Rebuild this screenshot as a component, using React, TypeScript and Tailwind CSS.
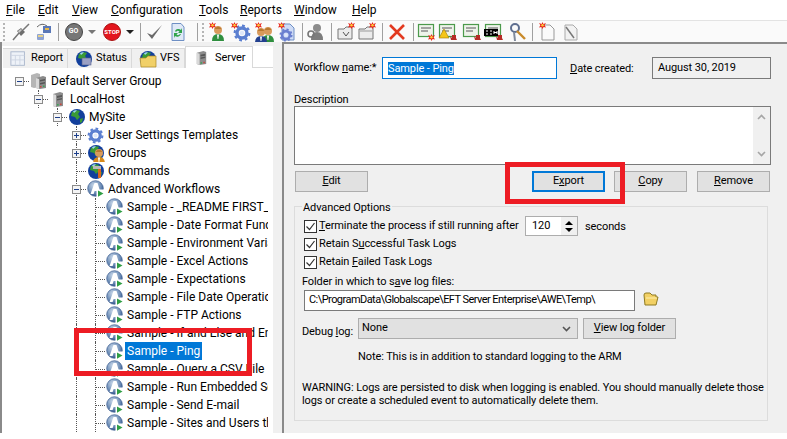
import React from "react";

const FONT = "font-['Roboto','Noto_Sans',sans-serif]";
const SMALL = "text-[11px] tracking-[-0.1px]";

function AIcon() {
  return (
    <svg width="18" height="18" viewBox="0 0 18 18">
      <defs>
        <radialGradient id="ag" cx="40%" cy="30%" r="75%">
          <stop offset="0" stopColor="#c8d8ea" />
          <stop offset="0.6" stopColor="#6f8fb8" />
          <stop offset="1" stopColor="#2c4f86" />
        </radialGradient>
      </defs>
      <circle cx="8.5" cy="8.5" r="7.8" fill="url(#ag)" stroke="#3d5f92" strokeWidth="0.7" />
      <path d="M7.5 3 L10.5 3 L14 14 L11 14 L10.4 11 L7.6 11 L6.6 14 L3.5 14 Z" fill="#fff" />
      <rect x="9.5" y="9.5" width="8" height="8" fill="#fff" />
      <path d="M11 10.5 L16.5 13.5 L11 16.8 Z" fill="#2f9e44" />
    </svg>
  );
}

function Globe({ extra }: { extra?: React.ReactNode }) {
  return (
    <svg width="18" height="18" viewBox="0 0 18 18">
      <circle cx="9" cy="9" r="8" fill="#123f9c" />
      <path d="M4 4 Q8 1 12 3 L10 6 L12 9 L9 12 L7 9 L3 8 Z" fill="#3a9a35" />
      <path d="M12 11 L15 10 L14 14 L12 15 Z" fill="#3a9a35" />
      <path d="M5 3 Q7 2 9 2.4 L6 5 Z" fill="#9fd3f5" />
      {extra}
    </svg>
  );
}

function Server({ s = 16 }: { s?: number }) {
  return (
    <svg width={s} height={s + 1} viewBox="0 0 16 17">
      <path d="M3 3 L10 1 L13 2 V15 L6 16 L3 15 Z" fill="#8d8d8d" />
      <path d="M3 3 L6 4 V16 L3 15 Z" fill="#d9d9d9" />
      <path d="M7 5 L12 4 V6 L7 7 Z M7 8 L12 7 V8.5 L7 9.5 Z" fill="#585858" />
      <rect x="7" y="13" width="1.6" height="1.6" fill="#3aa655" />
      <rect x="10" y="12.5" width="1.6" height="1.6" fill="#c9473c" />
    </svg>
  );
}

function Servers() {
  return (
    <svg width="18" height="18" viewBox="0 0 18 18">
      <path d="M1 3 L7 1 L10 2 V15 L4 16 L1 15 Z" fill="#b5b5b5" />
      <path d="M6 6 L13 4 L16 5 V16 L10 17 L6 16 Z" fill="#8a8a8a" />
      <path d="M6 6 L9 7 V17 L6 16 Z" fill="#d8d8d8" />
      <path d="M10 8 L15 7 V8.5 L10 9.5 Z M10 11 L15 10 V11.5 L10 12.5 Z" fill="#555" />
      <rect x="10" y="14" width="1.5" height="1.5" fill="#c9473c" />
      <rect x="13" y="13.5" width="1.5" height="1.5" fill="#3aa655" />
    </svg>
  );
}

function Gear({ c = "#5b7fd0", s = 18 }: { c?: string; s?: number }) {
  return (
    <svg width={s} height={s} viewBox="0 0 18 18">
      <circle cx="9" cy="9" r="5" fill="none" stroke={c} strokeWidth="3.4" />
      <circle cx="9" cy="9" r="7.3" fill="none" stroke={c} strokeWidth="2.2" strokeDasharray="2.8 2.9" />
      <circle cx="9" cy="9" r="2.2" fill="#dfe8fa" />
    </svg>
  );
}

function Burst({ x = 0, y = 0 }: { x?: number; y?: number }) {
  return (
    <g transform={`translate(${x} ${y})`}>
      <path d="M3.5 0 L4.4 2 L7 1 L5.6 3.3 L7 5.6 L4.6 5 L3.5 7 L2.5 5 L0 5.6 L1.4 3.3 L0 1 L2.6 2 Z" fill="#e8261b" />
      <circle cx="3.5" cy="3.3" r="1.2" fill="#ffd23c" />
    </g>
  );
}

function Person({ x = 0, y = 0, body = "#2f8f3f" }: { x?: number; y?: number; body?: string }) {
  return (
    <g transform={`translate(${x} ${y})`}>
      <circle cx="6" cy="5" r="4" fill="#d89a5b" />
      <path d="M2.5 4 Q6 -1 9.5 4 Z" fill="#b9782f" />
      <path d="M0 16 Q0 9 6 9 Q12 9 12 16 Z" fill={body} />
      <path d="M5 9.5 H7 L6.4 14 H5.6 Z" fill="#fff" />
    </g>
  );
}

const svg18 = (c: React.ReactNode, w = 20) => (
  <svg width={w} height="20" viewBox="0 0 20 20">
    {c}
  </svg>
);

const Cert = ({ children }: { children?: React.ReactNode }) => (
  <>
    <rect x="1.5" y="2.5" width="15" height="12" fill="#eef3ea" stroke="#4c9a4c" strokeWidth="1.2" />
    <path d="M4 6 H14 M4 9 H11" stroke="#8a8a8a" strokeWidth="1.4" />
    {children}
  </>
);

const Tip = () => <path d="M12 14 L14 16 L16 14 L18 16 L19 18 H13 Z M14 13 H18 V16 H14 Z" fill="#b52b25" />;

const TOOLS: Array<{ w: number; n?: React.ReactNode; sep?: boolean }> = [
  { w: 23, n: svg18(<g><path d="M2 18 L8 11 M12 8 L18 2" stroke="#777" strokeWidth="1.5" /><path d="M6 9 L10 6 L14 10 L10 14 Z" fill="#6e6e6e" /><path d="M7 9 L10 7 L11 8 L8 11 Z" fill="#c8c8c8" /></g>) },
  { w: 23, n: svg18(<g><path d="M3 5 Q8 0 13 4" fill="none" stroke="#666" /><rect x="9" y="4" width="8" height="7" fill="#5a78b8" /><rect x="11" y="6" width="4" height="2" fill="#e6b94a" /><rect x="3" y="12" width="7" height="6" rx="1" fill="#8ea3d2" /><rect x="4" y="13" width="5" height="2" fill="#e7d289" /></g>) },
  { w: 7, sep: true },
  { w: 23, n: <div className="flex h-[18px] w-[18px] items-center justify-center rounded-full border border-[#444] bg-[#777]"><span className="text-[7px] leading-none font-bold text-white">GO</span></div> },
  { w: 14, n: <div className="h-0 w-0 border-x-[4px] border-t-[4px] border-x-transparent border-t-[#777]" /> },
  { w: 26, n: <div className="flex h-[18px] w-[18px] items-center justify-center rounded-full border border-[#a11] bg-[#e3161e]"><span className="text-[6px] leading-none font-bold text-white">STOP</span></div> },
  { w: 10, n: <div className="h-0 w-0 border-x-[4px] border-t-[4px] border-x-transparent border-t-[#222]" /> },
  { w: 10, sep: true },
  { w: 18, n: svg18(<path d="M3 11 L8 17 L18 3 L8 13 Z" fill="#6a6a6a" />) },
  { w: 30, n: svg18(<g><path d="M4 1.5 H13 L16 5 V18.5 H4 Z" fill="#dfe9f7" stroke="#6e8fc4" /><path d="M7 9 A4 4 0 0 1 13 8 L14 6 V11 H10 L11.5 9.5 A2.5 2.5 0 0 0 8 10 Z M13 12 A4 4 0 0 1 7 14 L6 16 V11 H10 L8.5 12.5 A2.5 2.5 0 0 0 12 12 Z" fill="#2fa34a" /></g>) },
  { w: 8, sep: true },
  { w: 23, n: svg18(<g><Person x={4} y={3} /><Burst x={1} y={0} /></g>) },
  { w: 24, n: svg18(<g><g transform="translate(2 2)"><Gear s={18} /></g><Burst x={0} y={0} /></g>) },
  { w: 22, n: svg18(<g><Person x={8} y={4} /><Person x={1} y={5} body="#23408f" /><Burst x={1} y={0} /></g>) },
  { w: 24, n: svg18(<g><path d="M5 2 H13 L17 6 V18 H5 Z" fill="#cfdcf6" stroke="#6e8fc4" /><g transform="translate(2 6)"><Gear s={14} c="#6a7fd0" /></g><Burst x={1} y={0} /></g>) },
  { w: 6, sep: true },
  { w: 21, n: svg18(<g><circle cx="11" cy="6" r="4" fill="#8c8c8c" /><path d="M5 18 Q5 10 11 10 Q17 10 17 18 Z" fill="#7d7d7d" /><circle cx="5" cy="12" r="3" fill="none" stroke="#777" strokeWidth="1.6" /></g>) },
  { w: 10, sep: true },
  { w: 20, n: svg18(<g><path d="M2 7 H8 L10 5 H16 V17 H2 Z" fill="#ececec" stroke="#777" /><path d="M7 10 L10 14 L13 10" fill="none" stroke="#555" /><Burst x={12} y={0} /></g>) },
  { w: 22, n: svg18(<g><path d="M2 7 H8 L10 5 H16 V17 H2 Z" fill="#ececec" stroke="#777" /><path d="M3 9 H15" stroke="#999" /><Burst x={12} y={0} /></g>) },
  { w: 8, sep: true },
  { w: 22, n: svg18(<path d="M3 3 L17 17 M17 3 L3 17" stroke="#e2391f" strokeWidth="2.6" />) },
  { w: 11, sep: true },
  { w: 16, n: svg18(<Cert><Burst x={11} y={12} /></Cert>) },
  { w: 26, n: svg18(<Cert><path d="M6 7 L11 16 H1 Z" fill="#f5c518" stroke="#a07a00" strokeWidth="0.6" /><Tip /></Cert>) },
  { w: 22, n: svg18(<Cert><Tip /></Cert>) },
  { w: 22, n: svg18(<g><Cert /><rect x="0" y="7" width="14" height="7" fill="#000" /><path d="M2 9 H4 M6 9 H8 M10 9 V12 M13 9 V12 M2 12 H4 M6 12 H8 M10 10.5 H13" stroke="#fff" strokeWidth="1" /><Tip /></g>) },
  { w: 26, n: svg18(<g><circle cx="7" cy="6" r="4" fill="none" stroke="#5f6f90" strokeWidth="2" /><path d="M9 9 L17 17" stroke="#c98a2b" strokeWidth="2.4" /><path d="M6 10 L7 19" stroke="#808a9c" strokeWidth="2" /></g>) },
  { w: 2, sep: true },
  { w: 28, n: svg18(<g><path d="M5 3 H13 L17 7 V18 H5 Z" fill="#fafafa" stroke="#999" /><Burst x={2} y={0} /></g>) },
  { w: 18, n: svg18(<g><path d="M5 3 H13 L17 7 V18 H5 Z" fill="#f2f2f2" stroke="#aaa" /><path d="M6 5 L14 16" stroke="#777" strokeWidth="1.5" /></g>) },
];

function Grip() {
  return <div className="mx-[1px] h-[18px] w-[3px] border-l-2 border-dotted border-[#b5b5b5]" />;
}

function Toolbar() {
  const left = TOOLS.slice(0, 11);
  const right = TOOLS.slice(11);
  const render = (t: (typeof TOOLS)[number], i: number) => (
    <div key={i} style={{ width: t.w }} className="flex h-[22px] shrink-0 items-center justify-center [&>*]:shrink-0">
      {t.sep ? <div className="h-[18px] w-px bg-[#a0a0a0]" /> : t.n}
    </div>
  );
  return (
    <div className="flex h-[22px] items-center border-t border-[#e3e3e3] bg-[#fafafa] pl-[2px]">
      <Grip />
      <div className="w-[2px]" />
      {left.map(render)}
      <Grip />
      {right.map(render)}
    </div>
  );
}

function Menu() {
  const items: Array<[string, string, number]> = [
    ["F", "ile", 32],
    ["E", "dit", 34],
    ["V", "iew", 39],
    ["C", "onfiguration", 88],
    ["T", "ools", 41],
    ["R", "eports", 54],
    ["W", "indow", 58],
    ["H", "elp", 40],
  ];
  return (
    <div className="flex h-[20px] items-center bg-white pl-[6px] text-[12px] text-black">
      {items.map(([u, r, w]) => (
        <span key={u} style={{ width: w }} className="shrink-0">
          <u>{u}</u>
          {r}
        </span>
      ))}
    </div>
  );
}

function Tab({ label, icon, w, active }: { label: string; icon: React.ReactNode; w: number; active?: boolean }) {
  return (
    <div
      style={{ width: w }}
      className={
        active
          ? `flex h-[23px] shrink-0 items-center gap-[6px] border-x border-t border-[#d9d9d9] bg-white pl-[8px] text-black ${SMALL}`
          : `mt-[2px] flex h-[21px] shrink-0 items-center gap-[3px] border-y border-r border-[#d9d9d9] bg-[#f0f0f0] pl-[7px] text-black ${SMALL}`
      }
    >
      {icon}
      <span>{label}</span>
    </div>
  );
}

function Expander({ kind }: { kind: "minus" | "plus" }) {
  return (
    <div className="relative flex h-[9px] w-[9px] items-center justify-center border border-[#8a8a8a] bg-[#f4f4f4]">
      <div className="h-px w-[5px] bg-[#1d3f8b]" />
      {kind === "plus" && <div className="absolute h-[5px] w-px bg-[#1d3f8b]" />}
    </div>
  );
}

type Row = {
  d: number;
  label: string;
  icon: React.ReactNode;
  exp?: "minus" | "plus";
  up?: boolean;
  guide?: boolean;
  sel?: boolean;
};

function TreeRow({ d, label, icon, exp, up, guide, sel }: Row) {
  return (
    <div className="flex h-[18px] w-[266px] shrink-0 items-center overflow-hidden whitespace-nowrap text-[12px] text-black">
      <div style={{ width: 8 + 19 * Math.max(d - 1, 0) }} className="shrink-0" />
      {d > 0 && (
        <div className="relative flex h-full w-[19px] shrink-0 justify-center">
          {guide && <div className="h-full w-0 border-l border-dotted border-[#555]" />}
        </div>
      )}
      <div className="relative flex h-full w-[19px] shrink-0 items-center justify-center">
        {up && <div className="absolute top-0 bottom-0 left-[9px] w-0 border-l border-dotted border-[#555]" />}
        <div className="absolute top-1/2 right-0 left-[10px] h-0 border-t border-dotted border-[#555]" />
        {exp && <Expander kind={exp} />}
      </div>
      <div className="flex w-[19px] shrink-0 items-center justify-center">{icon}</div>
      <span className={sel ? "ml-[1px] bg-[#0078d7] px-[2px] leading-[18px] text-white" : "ml-[3px] leading-[18px]"}>{label}</span>
    </div>
  );
}

const SAMPLES = [
  "Sample - _README FIRST_",
  "Sample - Date Format Functions",
  "Sample - Environment Variables",
  "Sample - Excel Actions",
  "Sample - Expectations",
  "Sample - File Date Operations",
  "Sample - FTP Actions",
  "Sample - If and Else and End",
  "Sample - Ping",
  "Sample - Query a CSV File",
  "Sample - Run Embedded Script",
  "Sample - Send E-mail",
  "Sample - Sites and Users that",
];

const ROWS: Row[] = [
  { d: 0, label: "Default Server Group", icon: <Servers />, exp: "minus" },
  { d: 1, label: "LocalHost", icon: <Server />, exp: "minus", up: true },
  { d: 2, label: "MySite", icon: <Globe />, exp: "minus", up: true },
  { d: 3, label: "User Settings Templates", icon: <Gear s={17} />, exp: "plus", up: true },
  { d: 3, label: "Groups", icon: <Globe extra={<Person x={6} y={4} body="#d88a1c" />} />, exp: "plus", up: true },
  { d: 3, label: "Commands", icon: <Globe extra={<g><rect x="6" y="4" width="8" height="3" fill="#b9b9b9" /><rect x="11" y="7" width="3" height="9" fill="#d8661c" /></g>} />, up: true },
  { d: 3, label: "Advanced Workflows", icon: <AIcon />, exp: "minus", up: true },
  ...SAMPLES.map((s) => ({ d: 4, label: s, icon: <AIcon />, up: true, guide: true, sel: s === "Sample - Ping" })),
];

function Tree() {
  return (
    <div className="flex flex-1 flex-col overflow-hidden bg-white pt-[4px]">
      {ROWS.map((r) => (
        <TreeRow key={r.label} {...r} />
      ))}
    </div>
  );
}

function Left() {
  return (
    <div className="flex w-[273px] shrink-0 flex-col border-l-2 border-[#8a8a8a] pt-[4px]">
      <div className="flex h-[22px] shrink-0 items-start bg-white pl-[1px]">
        <Tab
          label="Report"
          w={65}
          icon={svg18(<g><rect x="1" y="2" width="15" height="15" fill="#eef2f8" stroke="#a9b6cb" /><path d="M1 6 H16 M6 6 V17 M11 6 V17 M1 11 H16" stroke="#cdd5e2" /></g>, 18)}
        />
        <Tab
          label="Status"
          w={64}
          icon={<Globe extra={<rect x="7" y="8" width="9" height="7" fill="#9aa0c4" stroke="#565f8c" strokeWidth="0.6" />} />}
        />
        <Tab
          label="VFS"
          w={53}
          icon={<Globe extra={<path d="M1 8 H7 L9 6 H17 V17 H2 Z" fill="#f1d067" stroke="#a98824" strokeWidth="0.7" />} />}
        />
        <Tab label="Server" w={68} active icon={<Server s={15} />} />
        <div className="h-full flex-1 border-b border-[#d9d9d9]" />
      </div>
      <Tree />
    </div>
  );
}

function Btn({ children, w, focus, cls = "" }: { children: React.ReactNode; w: number; focus?: boolean; cls?: string }) {
  return (
    <div
      style={{ width: w }}
      className={`flex h-[21px] shrink-0 items-center justify-center bg-[#e1e1e1] text-black ${
        focus ? "border-2 border-[#0078d7]" : "border border-[#adadad]"
      } ${cls}`}
    >
      {children}
    </div>
  );
}

function Check({ children }: { children: React.ReactNode }) {
  return (
    <div className="flex h-[18px] items-center pl-[2px] whitespace-nowrap text-black">
      <div className="flex h-[13px] w-[13px] shrink-0 items-center justify-center border border-[#333] bg-white">
        <svg width="11" height="11" viewBox="0 0 11 11">
          <path d="M1.5 5.5 L4.5 8.5 L9.5 2" fill="none" stroke="#333" strokeWidth="1.2" />
        </svg>
      </div>
      <span className="ml-[2px]">{children}</span>
    </div>
  );
}

const Chevron = ({ up, c = "#a6a6a6" }: { up?: boolean; c?: string }) => (
  <svg width="9" height="6" viewBox="0 0 9 6">
    <path d={up ? "M1 5 L4.5 1.5 L8 5" : "M1 1 L4.5 4.5 L8 1"} fill="none" stroke={c} strokeWidth="1.6" />
  </svg>
);

function Right() {
  return (
    <div className={`flex-1 border-t-2 border-l-2 border-[#8a8a8a] bg-[#f0f0f0] pt-[13px] pl-[10px] whitespace-nowrap text-black ${SMALL}`}>
      <div className="flex h-[22px] items-center">
        <span className="mt-[1px] w-[88px] shrink-0">
          Workflow <u>n</u>ame:*
        </span>
        <div className="flex h-[22px] w-[175px] shrink-0 items-center border border-[#0078d7] bg-white pl-[5px]">
          <span className="bg-[#0078d7] leading-[13px] text-white">Sample - Ping</span>
        </div>
        <span className="mt-[2px] ml-[13px] w-[82px] shrink-0">
          <u>D</u>ate created:
        </span>
        <div className="flex h-[22px] w-[119px] shrink-0 items-start border border-[#7a7a7a] bg-[#f0f0f0] pt-[2px] pl-[5px]">
          August 30, 2019
        </div>
      </div>
      <div className="mt-[14px] h-[13px] leading-[14px]">Description</div>
      <div className="flex h-[59px] w-[477px] justify-end border border-[#7a7a7a] bg-white">
        <div className="flex h-full w-[17px] flex-col items-center justify-between bg-[#f0f0f0] py-[7px]">
          <Chevron up />
          <Chevron />
        </div>
      </div>
      <div className="mt-[6px] flex pl-[1px]">
        <Btn w={73}>
          <span>
            <u>E</u>dit
          </span>
        </Btn>
        <Btn w={73} focus cls="ml-[164px]">
          <span>
            E<u>x</u>port
          </span>
        </Btn>
        <Btn w={73} cls="ml-[9px]">
          <span>
            <u>C</u>opy
          </span>
        </Btn>
        <Btn w={73} cls="ml-[10px]">
          <span>
            <u>R</u>emove
          </span>
        </Btn>
      </div>
      <div className="relative mt-[14px] h-[215px] w-[474px] border border-[#dcdcdc] pt-[10px] pl-[7px]">
        <span className="absolute top-[-7px] left-[7px] bg-[#f0f0f0] px-[1px] leading-[16px]">Advanced Options</span>
        <div className="flex h-[18px] items-center">
          <div className="w-[223px] shrink-0">
            <Check>
              <u>T</u>erminate the process if still running after
            </Check>
          </div>
          <div className="flex h-[20px] w-[53px] shrink-0 items-stretch border border-[#adadad] bg-white">
            <span className="flex-1 pl-[6px] leading-[17px]">120</span>
            <div className="flex w-[16px] flex-col items-center justify-center gap-[3px] bg-[#f0f0f0]">
              <div className="h-0 w-0 border-x-[4px] border-b-[4px] border-x-transparent border-b-black" />
              <div className="h-0 w-0 border-x-[4px] border-t-[4px] border-x-transparent border-t-black" />
            </div>
          </div>
          <span className="mt-[2px] ml-[7px]">seconds</span>
        </div>
        <Check>
          Retain S<u>u</u>ccessful Task Logs
        </Check>
        <Check>
          Retain <u>F</u>ailed Task Logs
        </Check>
        <div className="mt-[3px] h-[16px] leading-[16px]">
          Folder in which to s<u>a</u>ve log files:
        </div>
        <div className="flex items-center">
          <div className="ml-[2px] flex h-[21px] w-[331px] shrink-0 items-center border border-[#7a7a7a] bg-white pl-[4px] tracking-[-0.55px]">
            C:\ProgramData\Globalscape\EFT Server Enterprise\AWE\Temp\
          </div>
          <svg className="mb-[3px] ml-[8px]" width="16" height="14" viewBox="0 0 16 14">
            <path d="M1 3 Q1 1 3 1 H7 L9 3 H13 V5 H15 L13 13 H2 Z" fill="#f2d064" stroke="#8f7b22" />
            <path d="M3 6 H14" stroke="#fff0ae" />
          </svg>
        </div>
        <div className="mt-[7px] flex">
          <span className="mt-[6px] w-[56px] shrink-0">
            Debug <u>l</u>og:
          </span>
          <div className="flex h-[21px] w-[220px] shrink-0 items-center justify-between border border-[#adadad] bg-[#e1e1e1] pr-[6px] pl-[3px]">
            <span>None</span>
            <Chevron c="#555" />
          </div>
          <Btn w={93} cls="ml-[5px]">
            <span>
              <u>V</u>iew log folder
            </span>
          </Btn>
        </div>
        <div className="mt-[8px] h-[16px] pl-[56px] leading-[16px]">Note: This is in addition to standard logging to the ARM</div>
        <div className="mt-[16px] w-[465px] leading-[13px] whitespace-normal">
          WARNING: Logs are persisted to disk when logging is enabled. You should manually delete those logs or create a scheduled event to automatically delete them.
        </div>
      </div>
    </div>
  );
}

export default function App() {
  return (
    <div className={`relative h-[439px] w-[787px] overflow-hidden bg-white ${FONT}`}>
      <div className="flex h-[433px] flex-col overflow-hidden bg-[#f0f0f0]">
        <Menu />
        <Toolbar />
        <div className="flex min-h-0 flex-1">
          <Left />
          <div className="w-[9px] shrink-0 bg-[#f0f0f0]" />
          <Right />
        </div>
      </div>
      <div className="absolute top-[328px] left-[74px] h-[48px] w-[178px] border-[5px] border-[#ed1c24]" />
      <div className="absolute top-[162px] left-[505px] h-[42px] w-[120px] border-[5px] border-[#ed1c24]" />
    </div>
  );
}
